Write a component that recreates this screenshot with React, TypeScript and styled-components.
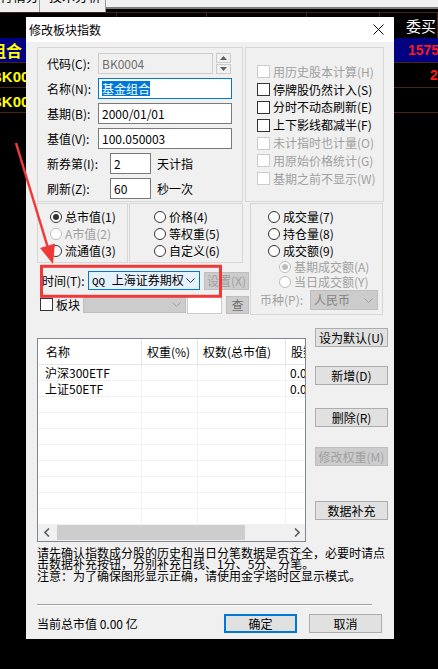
import React from "react";
import styled, { createGlobalStyle, css } from "styled-components";

const UI = `"Noto Sans CJK SC", "Noto Sans", sans-serif`;
const NUM = `"Liberation Sans", "Noto Sans CJK SC", sans-serif`;
const MONO = `"Liberation Mono", "Noto Sans CJK SC", monospace`;

const GlobalStyle = createGlobalStyle`
  * { box-sizing: border-box; }
  html, body { margin: 0; padding: 0; background: #000; }
  body { width: 438px; height: 669px; overflow: hidden; font-family: ${UI}; font-size: 12px; }
`;

const Screen = styled.div`
  position: relative;
  width: 438px;
  height: 669px;
  background: #000;
  overflow: hidden;
`;

/* ---------- market screen behind the dialog ---------- */
const TabStrip = styled.div`
  display: flex;
  align-items: flex-start;
  height: 12px;
`;
const Tab = styled.div<{ $w: number; $indent: number }>`
  flex: 0 0 ${(p) => p.$w}px;
  height: 12px;
  background: #f0f0f0;
  border-right: 1px solid #9a9a9a;
  overflow: hidden;
  font: 13px/13px ${UI};
  color: #000;
  white-space: nowrap;
  padding-left: ${(p) => p.$indent}px;
`;
const TabLabel = styled.div`
  margin-top: -11px;
`;
const TabFill = styled.div`
  flex: 1;
  height: 9px;
  background: #f0f0f0;
  border-bottom: 2px solid #7e7e7e;
`;
const HeadRow = styled.div`
  display: flex;
  height: 26px;
  border-top: 1px solid #4a2418;
`;
const HeadCell = styled.div<{ $w?: number }>`
  ${(p) => (p.$w ? `flex: 0 0 ${p.$w}px;` : "flex: 1;")}
  border-right: 1px solid #4a2418;
  color: #fff;
  font: 15px/25px ${UI};
  padding-left: 26px;
  white-space: nowrap;
  overflow: hidden;
`;
const DataRow = styled.div<{ $blue?: boolean }>`
  display: flex;
  height: 25px;
  border-bottom: 1px solid #4a2418;
  background: ${(p) => (p.$blue ? "#000080" : "#000")};
`;
const LeftCell = styled.div<{ $offset: number }>`
  flex: 0 0 26px;
  overflow: hidden;
  white-space: nowrap;
  color: #ffff00;
  font: bold 16px/24px ${UI};
  & > span {
    display: inline-block;
    margin-left: ${(p) => p.$offset}px;
  }
`;
const CodeText = styled.span`
  font: bold 15px/24px ${NUM};
`;
const Spacer = styled.div`
  flex: 1;
`;
const RightCell = styled.div<{ $pad: number }>`
  flex: 0 0 60px;
  overflow: hidden;
  white-space: nowrap;
  color: #ff1a1a;
  font: bold 14px/24px ${NUM};
  padding-left: ${(p) => p.$pad}px;
`;

/* ---------- dialog ---------- */
const Dialog = styled.div`
  position: absolute;
  left: 26px;
  top: 17px;
  width: 368px;
  height: 622px;
  background: #f0f0f0;
  display: flex;
  flex-direction: column;
  color: #000;
`;
const TitleBar = styled.div`
  height: 25px;
  flex: 0 0 25px;
  background: #fff;
  display: flex;
  align-items: center;
  justify-content: space-between;
  padding: 0 10px 0 3px;
  font: 12px/14px ${UI};
`;
const Body = styled.div`
  flex: 1;
  display: flex;
  flex-direction: column;
  padding: 5px 11px 0;
`;
const Row = styled.div<{ $mt?: number; $h?: number; $gap?: number }>`
  display: flex;
  align-items: flex-start;
  margin-top: ${(p) => p.$mt ?? 0}px;
  ${(p) => (p.$h ? `height: ${p.$h}px;` : "")}
  gap: ${(p) => p.$gap ?? 0}px;
`;
const Group = styled.div<{ $w: number; $h: number; $pad: string }>`
  flex: 0 0 ${(p) => p.$w}px;
  width: ${(p) => p.$w}px;
  height: ${(p) => p.$h}px;
  border: 1px solid #d7d7d7;
  padding: ${(p) => p.$pad};
  display: flex;
  flex-direction: column;
`;
const Stack = styled.div<{ $gap?: number; $w?: number; $ml?: number }>`
  display: flex;
  flex-direction: column;
  gap: ${(p) => p.$gap ?? 0}px;
  margin-left: ${(p) => p.$ml ?? 0}px;
  ${(p) => (p.$w ? `flex: 0 0 ${p.$w}px; width: ${p.$w}px;` : "")}
`;
const FieldRow = styled.div`
  display: flex;
  align-items: center;
  height: 21px;
`;
const Label = styled.span<{ $w?: number; $disabled?: boolean; $ml?: number }>`
  ${(p) => (p.$w ? `flex: 0 0 ${p.$w}px;` : "")}
  margin-left: ${(p) => p.$ml ?? 0}px;
  font: 12px/14px ${UI};
  white-space: nowrap;
  color: ${(p) => (p.$disabled ? "#a0a0a0" : "#000")};
`;
type FieldState = "normal" | "disabled" | "focused";
const Field = styled.div<{ $w: number; $state?: FieldState; $ml?: number }>`
  flex: 0 0 ${(p) => p.$w}px;
  height: 21px;
  margin-left: ${(p) => p.$ml ?? 0}px;
  display: flex;
  align-items: center;
  padding-left: 3px;
  background: ${(p) => (p.$state === "disabled" ? "#f0f0f0" : "#fff")};
  border: 1px solid
    ${(p) =>
      p.$state === "disabled" ? "#cccccc" : p.$state === "focused" ? "#0078d7" : "#7a7a7a"};
  color: ${(p) => (p.$state === "disabled" ? "#6d6d6d" : "#000")};
  font: 12px/16px ${UI};
  white-space: nowrap;
`;
const Selected = styled.span`
  background: #0078d7;
  color: #fff;
  line-height: 15px;
`;
const Spin = styled.div`
  flex: 0 0 15px;
  height: 21px;
  margin-left: 3px;
  display: flex;
  flex-direction: column;
  gap: 1px;
`;
const SpinBtn = styled.div`
  flex: 1;
  background: #f0f0f0;
  border: 1px solid #cccccc;
  display: flex;
  align-items: center;
  justify-content: center;
`;
const OptRow = styled.div<{ $h?: number; $indent?: number }>`
  display: flex;
  align-items: center;
  height: ${(p) => p.$h ?? 17}px;
  padding-left: ${(p) => p.$indent ?? 0}px;
`;
const CheckBox = styled.span<{ $disabled?: boolean }>`
  flex: 0 0 13px;
  width: 13px;
  height: 13px;
  background: #fff;
  border: 1px solid ${(p) => (p.$disabled ? "#cccccc" : "#333")};
  margin-right: 3px;
`;
const Radio = styled.span<{ $disabled?: boolean; $checked?: boolean }>`
  flex: 0 0 12px;
  width: 12px;
  height: 12px;
  border-radius: 50%;
  background: #fff;
  border: 1px solid ${(p) => (p.$disabled ? "#bcbcbc" : "#333")};
  margin-right: 3px;
  display: flex;
  align-items: center;
  justify-content: center;
  ${(p) =>
    p.$checked &&
    css`
      &::after {
        content: "";
        width: 6px;
        height: 6px;
        border-radius: 50%;
        background: ${p.$disabled ? "#bcbcbc" : "#333"};
      }
    `}
`;
const OptText = styled.span<{ $disabled?: boolean }>`
  font: 12px/14px ${UI};
  white-space: nowrap;
  color: ${(p) => (p.$disabled ? "#a0a0a0" : "#000")};
`;
const Combo = styled.div<{ $w: number; $h?: number; $tone: "active" | "disabled" | "blank"; $ml?: number }>`
  flex: 0 0 ${(p) => p.$w}px;
  height: ${(p) => p.$h ?? 19}px;
  margin-left: ${(p) => p.$ml ?? 0}px;
  display: flex;
  align-items: center;
  justify-content: space-between;
  padding: 0 4px 0 3px;
  font: 12px/14px ${UI};
  white-space: nowrap;
  overflow: hidden;
  ${(p) =>
    p.$tone === "active"
      ? css`
          background: #e5f1fb;
          border: 1px solid #0078d7;
          color: #000;
        `
      : p.$tone === "disabled"
      ? css`
          background: #cccccc;
          border: 1px solid #bfbfbf;
          color: #838383;
        `
      : css`
          background: #fff;
          border: 1px solid #cccccc;
        `}
`;
const Latin = styled.span`
  font: 11px/14px ${MONO};
`;
const Btn = styled.div<{
  $w?: number;
  $h?: number;
  $mt?: number;
  $ml?: number;
  $disabled?: boolean;
  $primary?: boolean;
  $dim?: boolean;
}>`
  flex: 0 0 auto;
  width: ${(p) => p.$w ?? 73}px;
  height: ${(p) => p.$h ?? 19}px;
  margin-top: ${(p) => p.$mt ?? 0}px;
  margin-left: ${(p) => p.$ml ?? 0}px;
  display: flex;
  align-items: center;
  justify-content: center;
  font: 12px/14px ${UI};
  white-space: nowrap;
  background: ${(p) => (p.$disabled ? "#cccccc" : "#e1e1e1")};
  color: ${(p) => (p.$dim ? "#6d6d6d" : p.$disabled ? "#a0a0a0" : "#000")};
  border: 1px solid ${(p) => (p.$primary ? "#0078d7" : p.$disabled ? "#bfbfbf" : "#adadad")};
  ${(p) => p.$primary && css`box-shadow: inset 0 0 0 1px #0078d7;`}
`;

/* list view */
const ListBox = styled.div`
  flex: 0 0 269px;
  width: 269px;
  height: 204px;
  margin-top: 10px;
  border: 1px solid #828790;
  background: #fff;
  display: flex;
  flex-direction: column;
  overflow: hidden;
`;
const ListHead = styled.div`
  display: flex;
  flex: 0 0 26px;
  height: 26px;
  border-bottom: 1px solid #e5e5e5;
`;
const HeadCol = styled.div<{ $w: number; $pl: number }>`
  flex: 0 0 ${(p) => p.$w}px;
  width: ${(p) => p.$w}px;
  border-right: 1px solid #e5e5e5;
  padding-left: ${(p) => p.$pl}px;
  font: 12px/25px ${UI};
  white-space: nowrap;
  overflow: hidden;
`;
const ListRows = styled.div`
  flex: 1;
  overflow: hidden;
`;
const ListRow = styled.div`
  display: flex;
  height: 16px;
  border-bottom: 1px solid #f0f0f0;
`;
const ListCell = styled.div<{ $w: number; $pl: number }>`
  flex: 0 0 ${(p) => p.$w}px;
  width: ${(p) => p.$w}px;
  border-right: 1px solid #f0f0f0;
  padding-left: ${(p) => p.$pl}px;
  font: 12px/15px ${UI};
  white-space: nowrap;
  overflow: hidden;
`;
const HScroll = styled.div`
  flex: 0 0 17px;
  height: 17px;
  display: flex;
  align-items: center;
  background: #f0f0f0;
`;
const ScrollArrow = styled.div`
  flex: 0 0 17px;
  height: 17px;
  display: flex;
  align-items: center;
  justify-content: center;
`;
const Thumb = styled.div`
  flex: 0 0 188px;
  height: 15px;
  margin-left: 2px;
  background: #cdcdcd;
`;
const ThumbTrack = styled.div`
  flex: 1;
  display: flex;
  align-items: center;
`;

const Note = styled.div`
  margin-top: 5px;
  display: flex;
  flex-direction: column;
`;
const NoteLine = styled.div<{ $h: number }>`
  height: ${(p) => p.$h}px;
  font: 12px/${(p) => p.$h}px ${UI};
  white-space: nowrap;
`;
const Separator = styled.div`
  margin-top: 23px;
  width: 335px;
  height: 2px;
  border-top: 1px solid #a0a0a0;
  border-bottom: 1px solid #fff;
`;
const Footer = styled.div`
  margin-top: 8px;
  height: 19px;
  display: flex;
  align-items: center;
  gap: 12px;
  padding-right: 1px;
`;
const FooterText = styled.span`
  flex: 1;
  font: 12px/14px ${UI};
  white-space: nowrap;
`;

const Annotation = styled.svg`
  position: absolute;
  left: 0;
  top: 0;
  width: 438px;
  height: 669px;
  pointer-events: none;
`;

const Chevron = ({ color }: { color: string }) => (
  <svg width="9" height="5" viewBox="0 0 9 5">
    <path d="M0.5 0.5 L4.5 4.5 L8.5 0.5" fill="none" stroke={color} strokeWidth="1" />
  </svg>
);

const Tri = ({ up }: { up?: boolean }) => (
  <svg width="7" height="4" viewBox="0 0 7 4">
    <path d={up ? "M0 4 L3.5 0 L7 4 Z" : "M0 0 L3.5 4 L7 0 Z"} fill="#606060" />
  </svg>
);

const CloseIcon = () => (
  <svg width="11" height="11" viewBox="0 0 11 11">
    <path d="M0.5 0.5 L10.5 10.5 M10.5 0.5 L0.5 10.5" stroke="#000" strokeWidth="1" />
  </svg>
);

const ArrowLeft = () => (
  <svg width="6" height="9" viewBox="0 0 6 9">
    <path d="M5 0.5 L1 4.5 L5 8.5" fill="none" stroke="#606060" strokeWidth="1.6" />
  </svg>
);
const ArrowRight = () => (
  <svg width="6" height="9" viewBox="0 0 6 9">
    <path d="M1 0.5 L5 4.5 L1 8.5" fill="none" stroke="#606060" strokeWidth="1.6" />
  </svg>
);

const checks: [string, boolean][] = [
  ["用历史股本计算(H)", true],
  ["停牌股仍然计入(S)", false],
  ["分时不动态刷新(E)", false],
  ["上下影线都减半(F)", false],
  ["未计指时也计量(O)", true],
  ["用原始价格统计(G)", true],
  ["基期之前不显示(W)", true],
];

const COLS = [104, 56, 88, 40];
const listRows: string[][] = [
  ["沪深300ETF", "", "", "0.000"],
  ["上证50ETF", "", "", "0.000"],
  ...Array.from({ length: 8 }, () => ["", "", "", ""]),
];

export default function App() {
  return (
    <Screen>
      <GlobalStyle />
      <TabStrip>
        <Tab $w={40} $indent={0}>
          <TabLabel>行情分析</TabLabel>
        </Tab>
        <Tab $w={66} $indent={9}>
          <TabLabel>技术分析</TabLabel>
        </Tab>
        <TabFill />
      </TabStrip>
      <HeadRow>
        <HeadCell $w={117} />
        <HeadCell $w={90} />
        <HeadCell $w={100} />
        <HeadCell $w={73} />
        <HeadCell>委买</HeadCell>
      </HeadRow>
      <DataRow $blue>
        <LeftCell $offset={-10}>
          <span>组合</span>
        </LeftCell>
        <Spacer />
        <RightCell $pad={30}>15750</RightCell>
      </DataRow>
      <DataRow>
        <LeftCell $offset={-9}>
          <CodeText>BK0005</CodeText>
        </LeftCell>
        <Spacer />
        <RightCell $pad={52}>26</RightCell>
      </DataRow>
      <DataRow>
        <LeftCell $offset={-9}>
          <CodeText>BK0006</CodeText>
        </LeftCell>
        <Spacer />
        <RightCell $pad={52} />
      </DataRow>

      <Dialog>
        <TitleBar>
          <span>修改板块指数</span>
          <CloseIcon />
        </TitleBar>
        <Body>
          {/* top groups */}
          <Row $gap={2}>
            <Group $w={206} $h={155} $pad="5px 9px 0 9px">
              <Stack $gap={4}>
                <FieldRow>
                  <Label $w={51}>代码(C):</Label>
                  <Field $w={115} $state="disabled">BK0004</Field>
                  <Spin>
                    <SpinBtn>
                      <Tri up />
                    </SpinBtn>
                    <SpinBtn>
                      <Tri />
                    </SpinBtn>
                  </Spin>
                </FieldRow>
                <FieldRow>
                  <Label $w={51}>名称(N):</Label>
                  <Field $w={134} $state="focused">
                    <Selected>基金组合</Selected>
                  </Field>
                </FieldRow>
                <FieldRow>
                  <Label $w={51}>基期(B):</Label>
                  <Field $w={134}>2000/01/01</Field>
                </FieldRow>
                <FieldRow>
                  <Label $w={51}>基值(V):</Label>
                  <Field $w={134}>100.050003</Field>
                </FieldRow>
                <FieldRow>
                  <Label $w={63}>新券第(I):</Label>
                  <Field $w={41}>2</Field>
                  <Label $ml={6}>天计指</Label>
                </FieldRow>
                <FieldRow>
                  <Label $w={63}>刷新(Z):</Label>
                  <Field $w={41}>60</Field>
                  <Label $ml={6}>秒一次</Label>
                </FieldRow>
              </Stack>
            </Group>
            <Group $w={139} $h={155} $pad="15px 0 0 11px">
              {checks.map(([t, d]) => (
                <OptRow key={t} $h={17.8}>
                  <CheckBox $disabled={d} />
                  <OptText $disabled={d}>{t}</OptText>
                </OptRow>
              ))}
            </Group>
          </Row>

          {/* option groups */}
          <Row $mt={1}>
            <Stack $w={213}>
              <Row $gap={1}>
                <Group $w={91} $h={60} $pad="4px 0 0 12px">
                  <OptRow>
                    <Radio $checked />
                    <OptText>总市值(1)</OptText>
                  </OptRow>
                  <OptRow>
                    <Radio $disabled />
                    <OptText $disabled>A市值(2)</OptText>
                  </OptRow>
                  <OptRow>
                    <Radio />
                    <OptText>流通值(3)</OptText>
                  </OptRow>
                </Group>
                <Group $w={114} $h={60} $pad="4px 0 0 24px">
                  <OptRow>
                    <Radio />
                    <OptText>价格(4)</OptText>
                  </OptRow>
                  <OptRow>
                    <Radio />
                    <OptText>等权重(5)</OptText>
                  </OptRow>
                  <OptRow>
                    <Radio />
                    <OptText>自定义(6)</OptText>
                  </OptRow>
                </Group>
              </Row>
              <Row $mt={7} $h={19}>
                <FieldRow>
                  <Label $w={46} $ml={5}>时间(T):</Label>
                  <Combo $w={112} $tone="active">
                    <span>
                      <Latin>QQ </Latin>上海证券期权
                    </span>
                    <Chevron color="#333" />
                  </Combo>
                  <Btn $w={45} $h={18} $ml={4} $disabled>
                    设置(X)
                  </Btn>
                </FieldRow>
              </Row>
              <Row $mt={6} $h={19}>
                <OptRow $h={19} $indent={3}>
                  <CheckBox />
                  <OptText>板块</OptText>
                  <Combo $w={103} $h={17} $tone="disabled" $ml={3}>
                    <span />
                    <Chevron color="#a0a0a0" />
                  </Combo>
                  <Combo $w={35} $h={18} $tone="blank" $ml={1} />
                  <Btn $w={23} $h={18} $ml={4} $disabled $dim>
                    查
                  </Btn>
                </OptRow>
              </Row>
            </Stack>
            <Group $w={133} $h={112} $pad="4px 0 0 9px">
              <OptRow $indent={8}>
                <Radio />
                <OptText>成交量(7)</OptText>
              </OptRow>
              <OptRow $indent={8}>
                <Radio />
                <OptText>持仓量(8)</OptText>
              </OptRow>
              <OptRow $indent={8}>
                <Radio />
                <OptText>成交额(9)</OptText>
              </OptRow>
              <OptRow $h={15} $indent={19}>
                <Radio $disabled $checked />
                <OptText $disabled>基期成交额(A)</OptText>
              </OptRow>
              <OptRow $h={15} $indent={19}>
                <Radio $disabled />
                <OptText $disabled>当日成交额(Y)</OptText>
              </OptRow>
              <OptRow $h={22}>
                <Label $w={50} $disabled>
                  币种(P):
                </Label>
                <Combo $w={68} $h={20} $tone="disabled">
                  <span>人民币</span>
                  <Chevron color="#a0a0a0" />
                </Combo>
              </OptRow>
            </Group>
          </Row>

          {/* list + buttons */}
          <Row $mt={13}>
            <ListBox>
              <ListHead>
                <HeadCol $w={COLS[0]} $pl={8}>名称</HeadCol>
                <HeadCol $w={COLS[1]} $pl={5}>权重(%)</HeadCol>
                <HeadCol $w={COLS[2]} $pl={5}>权数(总市值)</HeadCol>
                <HeadCol $w={COLS[3]} $pl={5}>股数</HeadCol>
              </ListHead>
              <ListRows>
                {listRows.map((r, i) => (
                  <ListRow key={i}>
                    {r.map((c, j) => (
                      <ListCell key={j} $w={COLS[j]} $pl={j === 0 ? 7 : 4}>
                        {c}
                      </ListCell>
                    ))}
                  </ListRow>
                ))}
              </ListRows>
              <HScroll>
                <ScrollArrow>
                  <ArrowLeft />
                </ScrollArrow>
                <ThumbTrack>
                  <Thumb />
                </ThumbTrack>
                <ScrollArrow>
                  <ArrowRight />
                </ScrollArrow>
              </HScroll>
            </ListBox>
            <Stack $w={73} $ml={9}>
              <Btn>设为默认(U)</Btn>
              <Btn $mt={19}>新增(D)</Btn>
              <Btn $mt={23}>删除(R)</Btn>
              <Btn $mt={20} $disabled>
                修改权重(M)
              </Btn>
              <Btn $mt={35}>数据补充</Btn>
            </Stack>
          </Row>

          <Note>
            <NoteLine $h={11}>请先确认指数成分股的历史和当日分笔数据是否齐全，必要时请点</NoteLine>
            <NoteLine $h={12}>击数据补充按钮，分别补充日线、1分、5分、分笔。</NoteLine>
            <NoteLine $h={11}>注意：为了确保图形显示正确，请使用金字塔时区显示模式。</NoteLine>
          </Note>
          <Separator />
          <Footer>
            <FooterText>当前总市值 0.00 亿</FooterText>
            <Btn $primary>确定</Btn>
            <Btn>取消</Btn>
          </Footer>
        </Body>
      </Dialog>

      <Annotation viewBox="0 0 438 669">
        <rect x="41.5" y="266.3" width="179" height="30" fill="none" stroke="#f03a3a" strokeWidth="3" />
        <line x1="16" y1="143" x2="47.4" y2="246" stroke="#f03a3a" strokeWidth="2.5" />
        <polygon points="53,264 40,248 55,243.5" fill="#f03a3a" />
      </Annotation>
    </Screen>
  );
}
